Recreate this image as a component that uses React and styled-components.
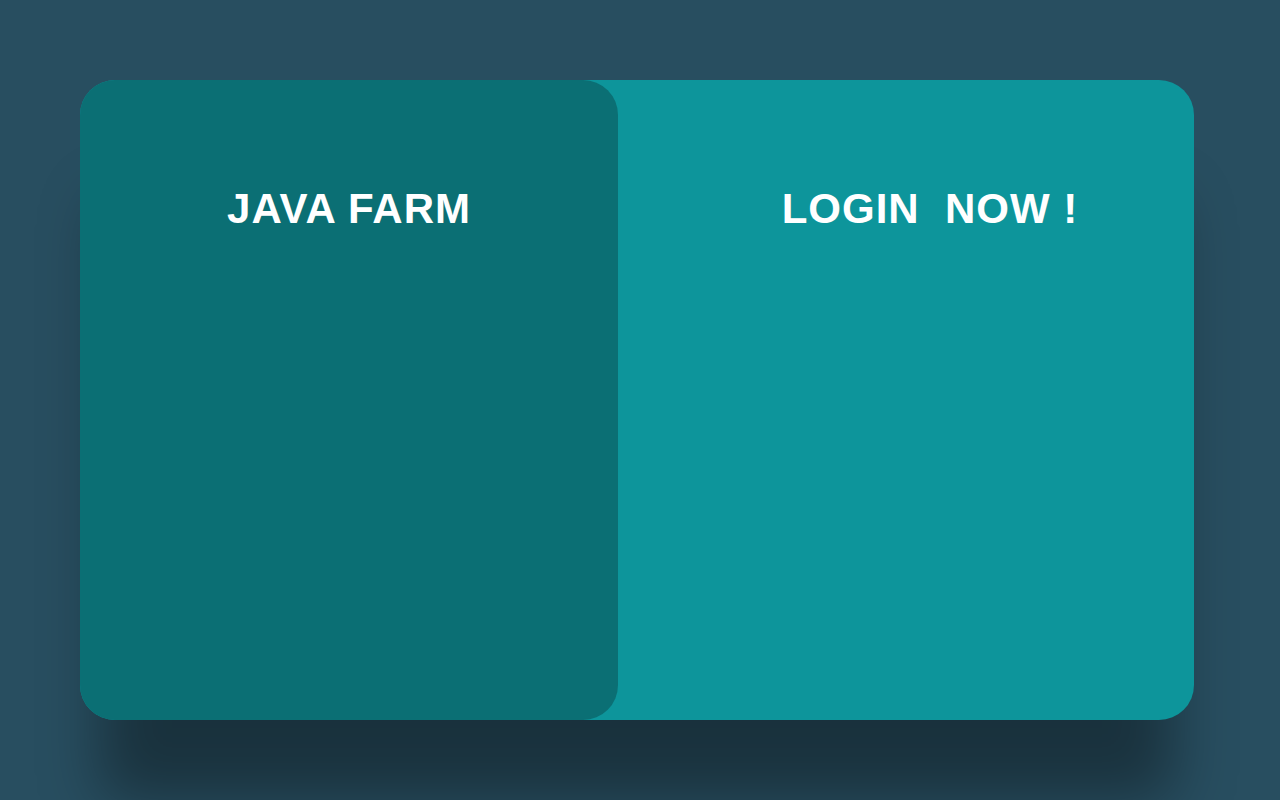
import React from "react";
import styled, { createGlobalStyle } from "styled-components";

const GlobalStyle = createGlobalStyle`
  html, body {
    margin: 0;
    padding: 0;
    background: #284e60;
    font-family: "Liberation Sans", Arial, sans-serif;
  }
`

const Page = styled.div`
  width: 1280px;
  height: 800px;
  box-sizing: border-box;
  padding: 80px 86px 80px 80px;
  background: #284e60;
  overflow: hidden;
`

const Card = styled.div`
  display: flex;
  width: 1114px;
  height: 640px;
  border-radius: 35px;
  background: #0d959b;
  box-shadow: 0 100px 60px -20px rgba(0, 0, 0, 0.36);
`

const Panel = styled.div`
  display: flex;
  flex-direction: column;
  align-items: center;
  box-sizing: border-box;
  padding-top: 108px;
  padding-left: ${p => p.$shift || 0}px;
  width: ${p => p.$width}px;
  border-radius: 35px;
  background: ${p => p.$bg || "transparent"};
`

const Title = styled.h1`
  margin: 0;
  font-size: 42px;
  line-height: 1;
  font-weight: 700;
  color: #ffffff;
  white-space: pre;
  letter-spacing: 1px;
`

function App() {
  return (
    <Page>
      <GlobalStyle />
      <Card>
        <Panel $width={538} $bg="#0b6f74">
          <Title>JAVA FARM</Title>
        </Panel>
        <Panel $width={576} $shift={48}>
          <Title>LOGIN  NOW !</Title>
        </Panel>
      </Card>
    </Page>
  )
}

export default App
